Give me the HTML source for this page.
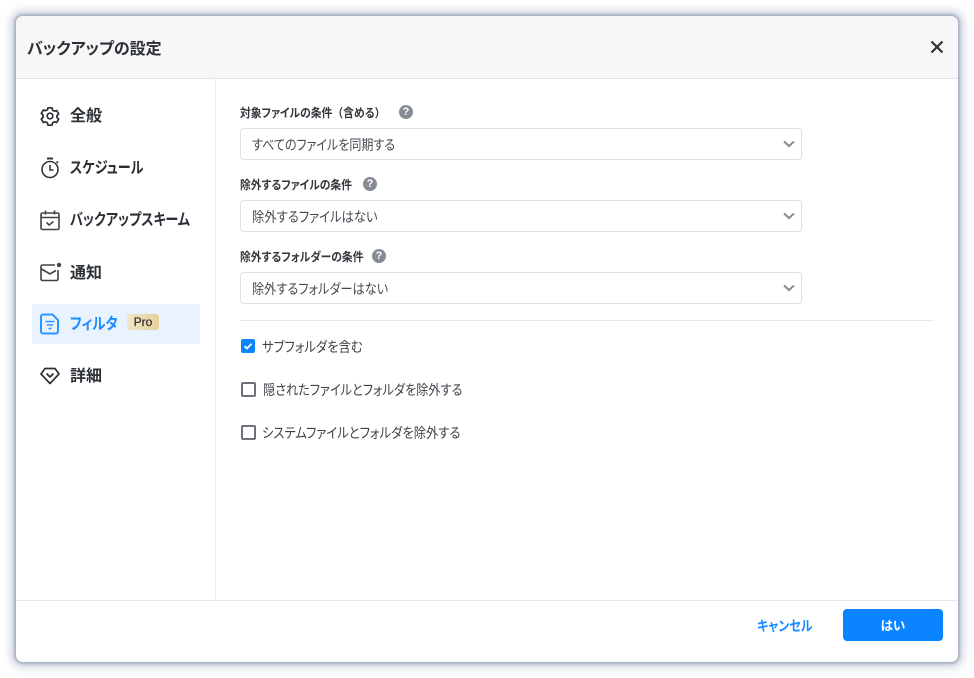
<!DOCTYPE html>
<html lang="ja">
<head>
<meta charset="utf-8">
<style>
html,body{margin:0;padding:0;width:974px;height:678px;overflow:hidden;background:#fff;}
body{font-family:"Liberation Sans","Noto Sans CJK JP",sans-serif;position:relative;color:#2b2f36;font-feature-settings:"palt" 1;}
.win{position:absolute;left:16px;top:16px;width:942px;height:646px;background:#fff;border-radius:7px;box-shadow:0 0 2px 2px #a9b1c3,0 0 8px 6px rgba(172,180,202,.5);overflow:hidden;}
.abs{position:absolute;white-space:nowrap;transform-origin:0 50%;}
.head{position:absolute;left:0;top:0;width:942px;height:62px;background:#f7f7f8;border-bottom:1px solid #e3e4e7;}
.vline{position:absolute;left:199px;top:63px;width:1px;height:521px;background:#ebecef;}
.fline{position:absolute;left:0;top:584px;width:942px;height:1px;background:#e8e9ec;}
.nav{font-size:16px;font-weight:700;line-height:22px;color:#2b2f36;}
.lab{font-size:12px;font-weight:700;line-height:18px;color:#33373d;}
.sel{position:absolute;left:224px;width:560px;height:30px;border:1px solid #dcdfe6;border-radius:4px;background:#fff;font-size:14px;line-height:30px;color:#454a52;}
.sel span{position:absolute;left:11px;top:1px;white-space:nowrap;transform-origin:0 50%;}
.sel svg{position:absolute;left:542px;top:11px;}
.q{position:absolute;width:14px;height:14px;border-radius:50%;background:#868b96;color:#fff;font-size:11px;font-weight:700;line-height:14px;text-align:center;}
.cb{position:absolute;left:225px;width:11px;height:11px;border:2px solid #6b7079;border-radius:2px;background:#fff;}
.cbt{font-size:14px;line-height:20px;color:#3e4249;}
.np{font-feature-settings:"palt" 0;}
</style>
</head>
<body>
<div class="win">
  <div class="head"></div>
  <div class="abs" style="left:11px;top:22px;font-size:16px;font-weight:700;line-height:24px;color:#2b2f36;">バックアップの設定</div>
  <svg class="abs" style="left:914px;top:24px" width="14" height="14" viewBox="0 0 14 14"><path d="M1.500 1.500L12.500 12.500M12.500 1.500L1.500 12.500" stroke="#2f3338" stroke-width="2.200" fill="none"/></svg>
  <div class="vline"></div>
  <div class="fline"></div>

  <!-- sidebar icons -->
  <svg class="abs" style="left:24px;top:90px" width="20" height="20" viewBox="0 0 20 20" fill="none" stroke="#2b2f36" stroke-width="1.700" stroke-linejoin="round"><path d="M8 1.800h4l.6 2.400 1.700 1 2.400-.7 2 3.400-1.800 1.700v1.800l1.800 1.700-2 3.400-2.400-.7-1.700 1-.6 2.400H8l-.6-2.400-1.700-1-2.400.7-2-3.400 1.800-1.700V9.100L1.300 7.400l2-3.400 2.400.7 1.700-1z"/><circle cx="10" cy="10" r="2.800"/></svg>
  <svg class="abs" style="left:24px;top:141px" width="20" height="22" viewBox="0 0 20 22" fill="none" stroke="#33373d" stroke-width="1.600"><path d="M7 1.500h6" stroke-width="2"/><circle cx="10" cy="12.500" r="8"/><path d="M10 8v5h3.500"/><path d="M16.500 4.500l1.500 1.500"/></svg>
  <svg class="abs" style="left:24px;top:193px" width="20" height="22" viewBox="0 0 20 22" fill="none" stroke="#3f4349" stroke-width="1.600"><rect x="1" y="4" width="18" height="16.500" rx="1.500"/><path d="M1 8.500h18"/><path d="M5.500 1.500v4M14.500 1.500v4"/><path d="M6.500 13.500l2.700 2.500 4.300-3.500"/></svg>
  <svg class="abs" style="left:24px;top:246px" width="22" height="20" viewBox="0 0 22 20" fill="none" stroke="#3f4349" stroke-width="1.600"><path d="M15 3H2.500A1.500 1.500 0 0 0 1 4.500V17a1.500 1.500 0 0 0 1.500 1.500h14A1.500 1.500 0 0 0 18 17V8"/><path d="M1.500 7l8.500 5 6-3.500"/><circle cx="19" cy="3" r="2.200" fill="#3f4349" stroke="none"/></svg>
  <div class="abs" style="left:16px;top:288px;width:168px;height:40px;background:#e8f3ff;border-radius:2px;"></div>
  <svg class="abs" style="left:24px;top:297px" width="20" height="22" viewBox="0 0 20 22" fill="none" stroke="#2f95ff" stroke-width="2"><path d="M3 1.500h9.500L18 7v11.500a2 2 0 0 1-2 2H3a2 2 0 0 1-2-2v-15a2 2 0 0 1 2-2z"/><path d="M5.500 8.500h9M7 12h6M8.500 15.500h3" stroke-width="1.600"/></svg>
  <svg class="abs" style="left:24px;top:351px" width="20" height="18" viewBox="0 0 20 18" fill="none" stroke="#2b2f36" stroke-width="1.700" stroke-linejoin="round"><path d="M5 1.500h10l4 5.500-9 9.500L1 7z"/><path d="M6.500 6.500l3.500 3.500 3.500-3.500"/></svg>

  <!-- sidebar text -->
  <div class="abs nav" style="left:54px;top:90px;">全般</div>
  <div class="abs nav" style="left:54px;top:142px;transform:scaleX(.82);">スケジュール</div>
  <div class="abs nav" style="left:54px;top:194px;transform:scaleX(.82);">バックアップスキーム</div>
  <div class="abs nav" style="left:54px;top:247px;">通知</div>
  <div class="abs nav" style="left:54px;top:298px;color:#1a8cff;transform:scaleX(.84);">フィルタ</div>
  <div class="abs" style="left:111px;top:298px;width:32px;height:16px;border-radius:3px;background:linear-gradient(90deg,#f1e6c6,#e6cf9d);font-size:12px;line-height:17px;text-align:center;font-weight:400;color:#2f2d28;-webkit-text-stroke:.2px #2f2d28;">Pro</div>
  <div class="abs nav" style="left:54px;top:350px;">詳細</div>

  <!-- form -->
  <div class="abs lab" style="left:224px;top:88px;transform:scaleX(.9);">対象ファイルの条件<span class="np">（</span>含める<span class="np">）</span></div>
  <div class="q" style="left:383px;top:89px;">?</div>
  <div class="sel" style="top:112px;"><span style="transform:scaleX(.86);">すべてのファイルを同期する</span><svg width="12" height="8" viewBox="0 0 12 8"><path d="M1 1.500l5 4.500 5-4.500" fill="none" stroke="#868b96" stroke-width="2"/></svg></div>

  <div class="abs lab" style="left:224px;top:160px;transform:scaleX(.9);">除外するファイルの条件</div>
  <div class="q" style="left:347px;top:161px;">?</div>
  <div class="sel" style="top:184px;"><span style="transform:scaleX(.88);">除外するファイルはない</span><svg width="12" height="8" viewBox="0 0 12 8"><path d="M1 1.500l5 4.500 5-4.500" fill="none" stroke="#868b96" stroke-width="2"/></svg></div>

  <div class="abs lab" style="left:224px;top:232px;transform:scaleX(.9);">除外するフォルダーの条件</div>
  <div class="q" style="left:356px;top:233px;">?</div>
  <div class="sel" style="top:256px;"><span style="transform:scaleX(.87);">除外するフォルダーはない</span><svg width="12" height="8" viewBox="0 0 12 8"><path d="M1 1.500l5 4.500 5-4.500" fill="none" stroke="#868b96" stroke-width="2"/></svg></div>

  <div class="abs" style="left:224px;top:304px;width:694px;height:1px;background:#e8e9ec;"></div>

  <div class="abs" style="left:225px;top:323px;width:14px;height:14px;background:#0a84ff;border-radius:2px;"></div>
  <svg class="abs" style="left:225px;top:323px" width="14" height="14" viewBox="0 0 14 14"><path d="M3.500 7.200l2.500 2.300 4.500-4.700" fill="none" stroke="#fff" stroke-width="1.800"/></svg>
  <div class="abs cbt" style="left:246px;top:321px;transform:scaleX(.88);">サブフォルダを含む</div>

  <div class="cb" style="top:366px;"></div>
  <div class="abs cbt" style="left:247px;top:364px;transform:scaleX(.87);">隠されたファイルとフォルダを除外する</div>

  <div class="cb" style="top:409px;"></div>
  <div class="abs cbt" style="left:246px;top:407px;transform:scaleX(.88);">システムファイルとフォルダを除外する</div>

  <!-- footer -->
  <div class="abs" style="left:741px;top:600px;font-size:14px;font-weight:700;line-height:20px;color:#1a8cff;transform:scaleX(.86);">キャンセル</div>
  <div class="abs" style="left:827px;top:593px;width:100px;height:32px;border-radius:4px;background:#0a84ff;color:#fff;font-size:12.5px;font-weight:700;line-height:34px;text-align:center;">はい</div>
</div>
</body>
</html>
